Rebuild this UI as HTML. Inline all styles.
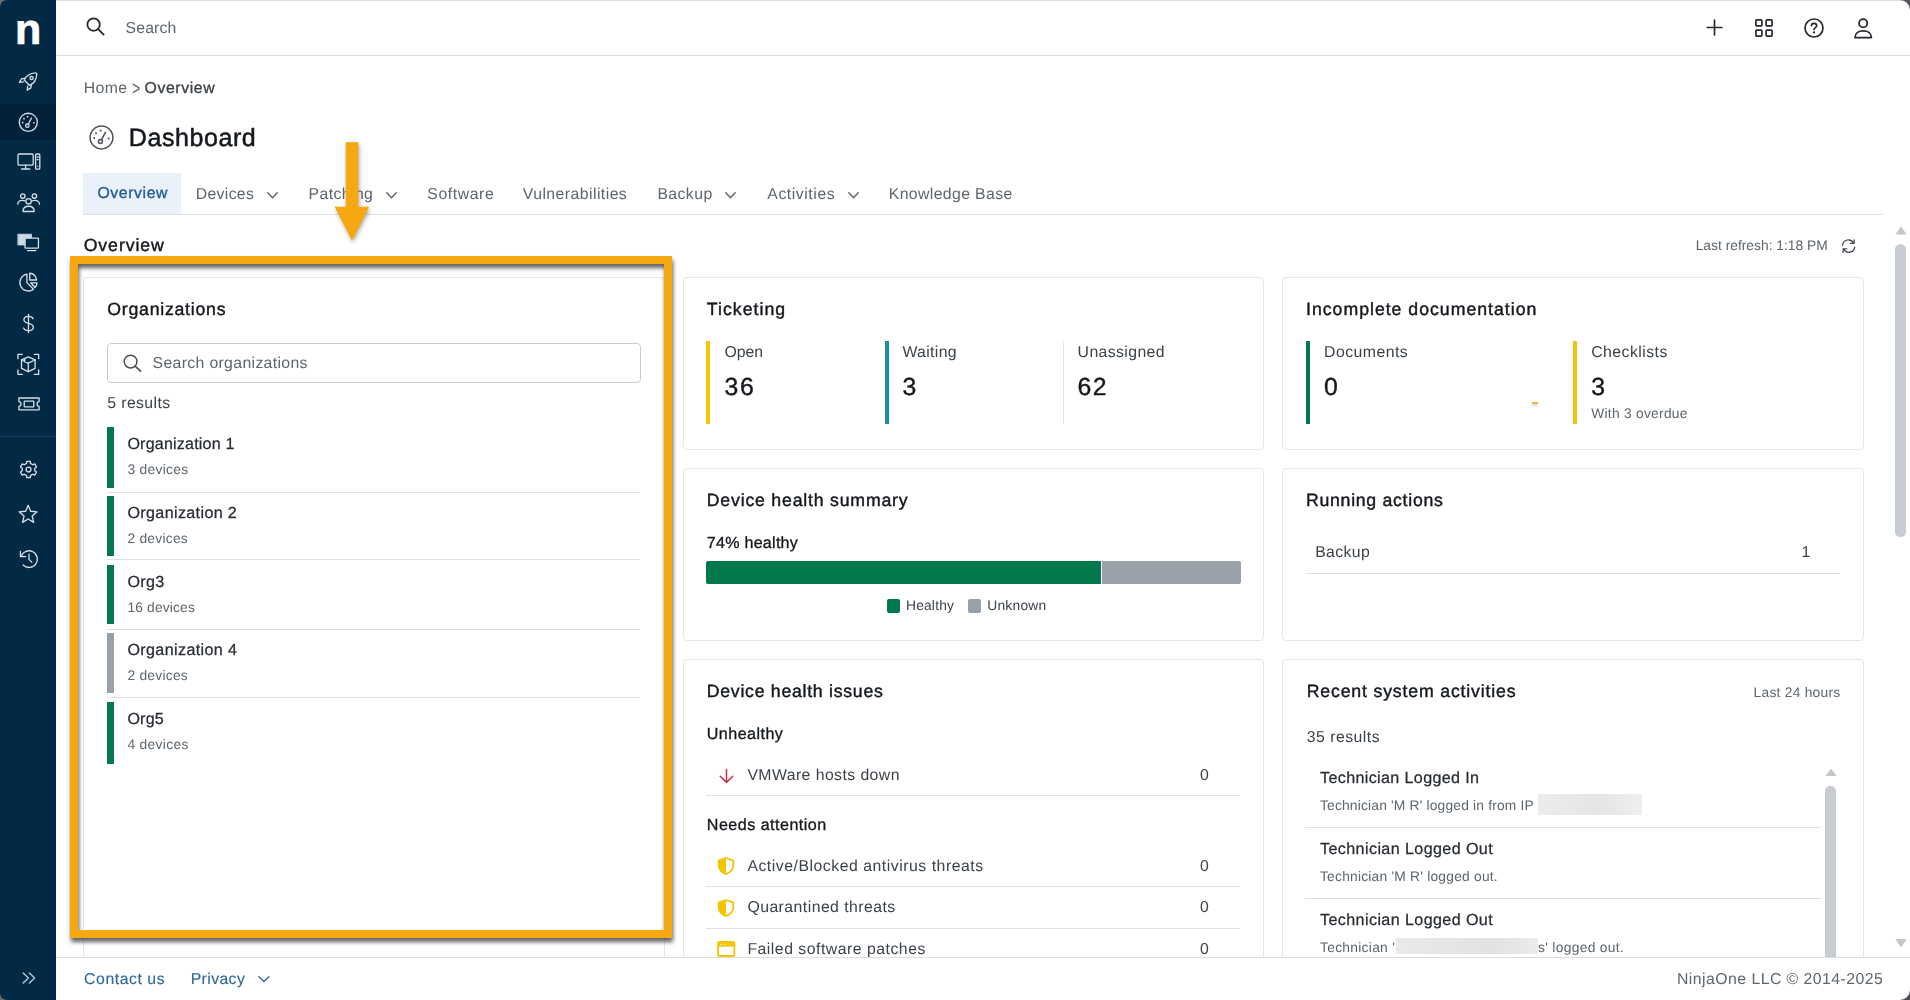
<!DOCTYPE html>
<html lang="en">
<head>
<meta charset="utf-8">
<title>Dashboard</title>
<style>
*{box-sizing:border-box;margin:0;padding:0}
html,body{width:1910px;height:1000px;overflow:hidden;background:#fff}
body{font-family:"Liberation Sans",sans-serif;color:#3b4249;position:relative}
.t{position:absolute;white-space:pre;line-height:1;text-rendering:geometricPrecision}
.a{position:absolute}
svg{position:absolute;overflow:visible}
.card{position:absolute;background:#fff;border:1px solid #e4e6e9;border-radius:4px}
.hr{position:absolute;height:1px;background:#dfe1e4}
</style>
</head>
<body>
<svg style="left:88.8px;top:125.4px" width="25" height="25" viewBox="0 0 25 25" ><g fill="none" stroke="#4a5158" stroke-width="1.5" stroke-linecap="round"><circle cx="12.5" cy="12.5" r="11.4"/><circle cx="11.4" cy="16.6" r="2"/><path d="M12.4 14.8 L16.4 7.4"/><path d="M5.2 13h.01M7 8.2h.01M11.6 5.6h.01M19.6 13.4h.01" stroke-width="2"/></g></svg>
<div class="a" style="left:83px;top:172.7px;width:98.3px;height:41.3px;background:#ebf1f8"></div>
<div class="a" style="left:83px;top:214px;width:1800px;height:1px;background:#dfe2e5"></div>
<svg style="left:267.2px;top:191.8px" width="11" height="6.6" viewBox="0 0 11 6.6" ><path d="M0.8 0.8 L5.5 5.8 L10.2 0.8" fill="none" stroke="#5d656d" stroke-width="1.4" stroke-linecap="round" stroke-linejoin="round"/></svg>
<svg style="left:386.2px;top:191.8px" width="11" height="6.6" viewBox="0 0 11 6.6" ><path d="M0.8 0.8 L5.5 5.8 L10.2 0.8" fill="none" stroke="#5d656d" stroke-width="1.4" stroke-linecap="round" stroke-linejoin="round"/></svg>
<svg style="left:724.8px;top:191.8px" width="11" height="6.6" viewBox="0 0 11 6.6" ><path d="M0.8 0.8 L5.5 5.8 L10.2 0.8" fill="none" stroke="#5d656d" stroke-width="1.4" stroke-linecap="round" stroke-linejoin="round"/></svg>
<svg style="left:847.8px;top:191.8px" width="11" height="6.6" viewBox="0 0 11 6.6" ><path d="M0.8 0.8 L5.5 5.8 L10.2 0.8" fill="none" stroke="#5d656d" stroke-width="1.4" stroke-linecap="round" stroke-linejoin="round"/></svg>
<svg style="left:1840.6px;top:238.6px" width="15.2" height="14.2" viewBox="0 0 16 15" ><g fill="none" stroke="#3b4249" stroke-width="1.3" stroke-linecap="round" stroke-linejoin="round"><path d="M1.6 6.4 A6.2 6.2 0 0 1 13.2 4.2"/><path d="M13.8 0.8 V4.6 H10"/><path d="M14.4 8.6 A6.2 6.2 0 0 1 2.8 10.8"/><path d="M2.2 14.2 V10.4 H6"/></g></svg>
<div class="card" style="left:83px;top:277px;width:581.5px;height:700px;border-bottom:none;border-radius:4px 4px 0 0;"></div>
<div class="card" style="left:683px;top:277px;width:581px;height:172.5px;"></div>
<div class="card" style="left:683px;top:468px;width:581px;height:172.5px;"></div>
<div class="card" style="left:683px;top:659px;width:581px;height:320px;border-bottom:none;border-radius:4px 4px 0 0;"></div>
<div class="card" style="left:1282px;top:277px;width:582px;height:172.5px;"></div>
<div class="card" style="left:1282px;top:468px;width:582px;height:172.5px;"></div>
<div class="card" style="left:1282px;top:659px;width:582px;height:320px;border-bottom:none;border-radius:4px 4px 0 0;"></div>
<div class="a" style="left:107px;top:343px;width:534px;height:39.5px;border:1px solid #c8ccd1;border-radius:4px"></div>
<svg style="left:122.6px;top:354.4px" width="19" height="18" viewBox="0 0 19 18" ><circle cx="7.6" cy="7.6" r="6.4" fill="none" stroke="#4a5158" stroke-width="1.5"/><path d="M12.3 12.3 L17.6 17.2" stroke="#4a5158" stroke-width="1.6" stroke-linecap="round"/></svg>
<div class="a" style="left:107px;top:427.0px;width:7px;height:60.6px;background:#04784d"></div>
<div class="a" style="left:107px;top:496.0px;width:7px;height:60.4px;background:#04784d"></div>
<div class="a" style="left:107px;top:565.0px;width:7px;height:59.2px;background:#04784d"></div>
<div class="a" style="left:107px;top:633.0px;width:7px;height:60.4px;background:#98a1a9"></div>
<div class="a" style="left:107px;top:702.0px;width:7px;height:61.7px;background:#04784d"></div>
<div class="hr" style="left:107px;top:491.8px;width:533px"></div>
<div class="hr" style="left:107px;top:559.4px;width:533px"></div>
<div class="hr" style="left:107px;top:628.5px;width:533px"></div>
<div class="hr" style="left:107px;top:696.9px;width:533px"></div>
<div class="a" style="left:706px;top:341.2px;width:4px;height:82.4px;background:#f5c30f"></div>
<div class="a" style="left:885px;top:341.2px;width:4px;height:82.4px;background:#1b8fa3"></div>
<div class="a" style="left:1063px;top:341.2px;width:1px;height:82.4px;background:#e1e4e7"></div>
<div class="a" style="left:1306px;top:341.2px;width:4px;height:82.4px;background:#04784d"></div>
<div class="a" style="left:1573px;top:341.2px;width:4px;height:82.4px;background:#f5c30f"></div>
<div class="a" style="left:1532px;top:402px;width:6px;height:2px;background:#f2b233;box-shadow:0 2px 2px rgba(0,0,0,.18)"></div>
<div class="a" style="left:706px;top:561.2px;width:395px;height:22.4px;background:#04784d;border-radius:2px 0 0 2px"></div>
<div class="a" style="left:1102px;top:561.2px;width:139px;height:22.4px;background:#98a1a9;border-radius:0 2px 2px 0"></div>
<div class="a" style="left:887.2px;top:599.2px;width:13px;height:13.5px;background:#04784d;border-radius:2px"></div>
<div class="a" style="left:968.4px;top:599.2px;width:13px;height:13.5px;background:#98a1a9;border-radius:2px"></div>
<div class="hr" style="left:706px;top:795.3px;width:534.2px"></div>
<div class="hr" style="left:706px;top:886.3px;width:534.2px"></div>
<div class="hr" style="left:706px;top:928.0px;width:534.2px"></div>
<svg style="left:719px;top:767px" width="15" height="16.5" viewBox="0 0 15 16.5" ><path d="M7.5 2.4V15M1.2 9.2 L7.5 15.4 L13.8 9.2" fill="none" stroke="#c2374d" stroke-width="1.5" stroke-linecap="round" stroke-linejoin="round"/></svg>
<svg style="left:717.3px;top:856.8px" width="18" height="18" viewBox="0 0 18 18" ><path d="M9 1 L16.3 3.7 V8 C16.3 12.2 13.2 15.5 9 17.1 C4.8 15.5 1.7 12.2 1.7 8 V3.7 Z" fill="none" stroke="#f5c400" stroke-width="1.8" stroke-linejoin="round"/><path d="M9 1 L1.7 3.7 V8 C1.7 12.2 4.8 15.5 9 17.1 Z" fill="#f5c400"/></svg>
<svg style="left:717.3px;top:898.8px" width="18" height="18" viewBox="0 0 18 18" ><path d="M9 1 L16.3 3.7 V8 C16.3 12.2 13.2 15.5 9 17.1 C4.8 15.5 1.7 12.2 1.7 8 V3.7 Z" fill="none" stroke="#f5c400" stroke-width="1.8" stroke-linejoin="round"/><path d="M9 1 L1.7 3.7 V8 C1.7 12.2 4.8 15.5 9 17.1 Z" fill="#f5c400"/></svg>
<svg style="left:717.4px;top:941.2px" width="18.4" height="16" viewBox="0 0 18.4 16" ><rect x="1" y="1" width="16.4" height="14" rx="1.6" fill="none" stroke="#f5c400" stroke-width="1.8"/><path d="M1 1.6 H17.4 V5.6 H1Z" fill="#f5c400"/><path d="M3.6 3.4h.01M6.2 3.4h.01M8.8 3.4h.01" stroke="#fff" stroke-width="1.1" stroke-linecap="round"/></svg>
<div class="hr" style="left:1306px;top:573.2px;width:534px"></div>
<div class="hr" style="left:1305px;top:827.4px;width:516px"></div>
<div class="hr" style="left:1305px;top:898.4px;width:516px"></div>
<div class="a" style="left:1538.4px;top:793.6px;width:103.2px;height:21.8px;background:linear-gradient(90deg,#ebecee,#e3e5e7 60%,#eeeff0)"></div>
<div class="a" style="left:1396px;top:938px;width:141.7px;height:16px;background:linear-gradient(90deg,#e9eaec,#e0e2e4 70%,#ebecee)"></div>
<svg style="left:1824.6px;top:768px" width="12" height="8"><path d="M6 0.4 L11.6 8 H0.4Z" fill="#c3c8ce"/></svg>
<div class="a" style="left:1825.3px;top:785.8px;width:10.5px;height:190px;background:#c9cdd3;border-radius:5px"></div>
<div class="a" style="left:0;top:0;width:1910px;height:1000px;will-change:transform"><span class="t" style="left:125.6px;top:21px;font-size:15.8px;color:#5d656d;letter-spacing:0.116px;">Search</span>
<span class="t" style="left:83.7px;top:81px;font-size:15.8px;color:#5d656d;letter-spacing:0.388px;">Home</span>
<span class="t" style="left:131.6px;top:79px;font-size:20px;color:#5d656d;transform:scaleX(.72);transform-origin:0 0;">&gt;</span>
<span class="t" style="left:144.5px;top:81px;font-size:15.8px;color:#3b4249;letter-spacing:0.621px;-webkit-text-stroke:0.3px #3b4249;">Overview</span>
<span class="t" style="left:128.8px;top:126px;font-size:25px;color:#14181c;letter-spacing:0.575px;-webkit-text-stroke:0.5px #14181c;">Dashboard</span>
<span class="t" style="left:97.5px;top:186px;font-size:15.8px;color:#1f5e95;letter-spacing:0.581px;-webkit-text-stroke:0.35px #1f5e95;">Overview</span>
<span class="t" style="left:195.8px;top:187px;font-size:15.8px;color:#5d656d;letter-spacing:0.310px;">Devices</span>
<span class="t" style="left:308.6px;top:187px;font-size:15.8px;color:#5d656d;letter-spacing:0.402px;">Patching</span>
<span class="t" style="left:427.3px;top:187px;font-size:15.8px;color:#5d656d;letter-spacing:0.581px;">Software</span>
<span class="t" style="left:522.8px;top:187px;font-size:15.8px;color:#5d656d;letter-spacing:0.444px;">Vulnerabilities</span>
<span class="t" style="left:657.4px;top:187px;font-size:15.8px;color:#5d656d;letter-spacing:0.418px;">Backup</span>
<span class="t" style="left:767.3px;top:187px;font-size:15.8px;color:#5d656d;letter-spacing:0.555px;">Activities</span>
<span class="t" style="left:888.8px;top:187px;font-size:15.8px;color:#5d656d;letter-spacing:0.373px;">Knowledge Base</span>
<span class="t" style="left:83.7px;top:237px;font-size:17.7px;color:#14181c;letter-spacing:0.917px;-webkit-text-stroke:0.42px #14181c;">Overview</span>
<span class="t" style="left:1695.7px;top:239px;font-size:13.8px;color:#5d656d;letter-spacing:0.009px;">Last refresh: 1:18 PM</span>
<span class="t" style="left:107.3px;top:301px;font-size:17.7px;color:#14181c;letter-spacing:0.757px;-webkit-text-stroke:0.42px #14181c;">Organizations</span>
<span class="t" style="left:152.5px;top:356px;font-size:15.8px;color:#5d656d;letter-spacing:0.348px;">Search organizations</span>
<span class="t" style="left:107.3px;top:396px;font-size:15.8px;color:#3b4249;letter-spacing:0.388px;">5 results</span>
<span class="t" style="left:127.4px;top:436px;font-size:16.1px;color:#272c32;letter-spacing:0.186px;-webkit-text-stroke:0.25px #272c32;">Organization 1</span>
<span class="t" style="left:127.4px;top:463px;font-size:13.8px;color:#5d656d;letter-spacing:0.318px;">3 devices</span>
<span class="t" style="left:127.4px;top:505px;font-size:16.1px;color:#272c32;letter-spacing:0.364px;-webkit-text-stroke:0.25px #272c32;">Organization 2</span>
<span class="t" style="left:127.4px;top:532px;font-size:13.8px;color:#5d656d;letter-spacing:0.259px;">2 devices</span>
<span class="t" style="left:127.4px;top:574px;font-size:16.1px;color:#272c32;letter-spacing:0.348px;-webkit-text-stroke:0.25px #272c32;">Org3</span>
<span class="t" style="left:127.4px;top:601px;font-size:13.8px;color:#5d656d;letter-spacing:0.161px;">16 devices</span>
<span class="t" style="left:127.4px;top:642px;font-size:16.1px;color:#272c32;letter-spacing:0.379px;-webkit-text-stroke:0.25px #272c32;">Organization 4</span>
<span class="t" style="left:127.4px;top:669px;font-size:13.8px;color:#5d656d;letter-spacing:0.259px;">2 devices</span>
<span class="t" style="left:127.4px;top:711px;font-size:16.1px;color:#272c32;letter-spacing:0.205px;-webkit-text-stroke:0.25px #272c32;">Org5</span>
<span class="t" style="left:127.4px;top:738px;font-size:13.8px;color:#5d656d;letter-spacing:0.342px;">4 devices</span>
<span class="t" style="left:706.8px;top:301px;font-size:17.7px;color:#14181c;letter-spacing:1.021px;-webkit-text-stroke:0.42px #14181c;">Ticketing</span>
<span class="t" style="left:724.4px;top:345px;font-size:15.8px;color:#3b4249;letter-spacing:0.041px;">Open</span>
<span class="t" style="left:724.4px;top:376px;font-size:24.8px;color:#14181c;letter-spacing:1.871px;-webkit-text-stroke:0.4px #14181c;">36</span>
<span class="t" style="left:902.4px;top:345px;font-size:15.8px;color:#3b4249;letter-spacing:0.355px;">Waiting</span>
<span class="t" style="left:902.4px;top:376px;font-size:24.8px;color:#14181c;-webkit-text-stroke:0.4px #14181c;">3</span>
<span class="t" style="left:1077.6px;top:345px;font-size:15.8px;color:#3b4249;letter-spacing:0.396px;">Unassigned</span>
<span class="t" style="left:1077.6px;top:376px;font-size:24.8px;color:#14181c;letter-spacing:1.338px;-webkit-text-stroke:0.4px #14181c;">62</span>
<span class="t" style="left:706.8px;top:492px;font-size:17.7px;color:#14181c;letter-spacing:0.799px;-webkit-text-stroke:0.42px #14181c;">Device health summary</span>
<span class="t" style="left:706.8px;top:535px;font-size:16.1px;color:#14181c;letter-spacing:0.248px;-webkit-text-stroke:0.32px #14181c;">74% healthy</span>
<span class="t" style="left:906.0px;top:599px;font-size:13.8px;color:#3b4249;letter-spacing:0.188px;">Healthy</span>
<span class="t" style="left:987.2px;top:599px;font-size:13.8px;color:#3b4249;letter-spacing:0.257px;">Unknown</span>
<span class="t" style="left:706.8px;top:683px;font-size:17.7px;color:#14181c;letter-spacing:0.726px;-webkit-text-stroke:0.42px #14181c;">Device health issues</span>
<span class="t" style="left:706.8px;top:726px;font-size:16.1px;color:#14181c;letter-spacing:0.449px;-webkit-text-stroke:0.32px #14181c;">Unhealthy</span>
<span class="t" style="left:747.4px;top:768px;font-size:15.8px;color:#3b4249;letter-spacing:0.433px;">VMWare hosts down</span>
<span class="t" style="left:1200.1px;top:768px;font-size:15.8px;color:#3b4249;">0</span>
<span class="t" style="left:706.8px;top:817px;font-size:16.1px;color:#14181c;letter-spacing:0.479px;-webkit-text-stroke:0.32px #14181c;">Needs attention</span>
<span class="t" style="left:747.4px;top:859px;font-size:15.8px;color:#3b4249;letter-spacing:0.524px;">Active/Blocked antivirus threats</span>
<span class="t" style="left:1200.1px;top:859px;font-size:15.8px;color:#3b4249;">0</span>
<span class="t" style="left:747.4px;top:900px;font-size:15.8px;color:#3b4249;letter-spacing:0.457px;">Quarantined threats</span>
<span class="t" style="left:1200.1px;top:900px;font-size:15.8px;color:#3b4249;">0</span>
<span class="t" style="left:747.4px;top:942px;font-size:15.8px;color:#3b4249;letter-spacing:0.505px;">Failed software patches</span>
<span class="t" style="left:1200.1px;top:942px;font-size:15.8px;color:#3b4249;">0</span>
<span class="t" style="left:1306.0px;top:301px;font-size:17.7px;color:#14181c;letter-spacing:0.993px;-webkit-text-stroke:0.42px #14181c;">Incomplete documentation</span>
<span class="t" style="left:1324.0px;top:345px;font-size:15.8px;color:#3b4249;letter-spacing:0.482px;">Documents</span>
<span class="t" style="left:1324.0px;top:376px;font-size:24.8px;color:#14181c;-webkit-text-stroke:0.4px #14181c;">0</span>
<span class="t" style="left:1591.2px;top:345px;font-size:15.8px;color:#3b4249;letter-spacing:0.465px;">Checklists</span>
<span class="t" style="left:1591.2px;top:376px;font-size:24.8px;color:#14181c;-webkit-text-stroke:0.4px #14181c;">3</span>
<span class="t" style="left:1591.2px;top:407px;font-size:13.8px;color:#5d656d;letter-spacing:0.267px;">With 3 overdue</span>
<span class="t" style="left:1306.0px;top:492px;font-size:17.7px;color:#14181c;letter-spacing:0.713px;-webkit-text-stroke:0.42px #14181c;">Running actions</span>
<span class="t" style="left:1315.2px;top:545px;font-size:15.8px;color:#3b4249;letter-spacing:0.381px;">Backup</span>
<span class="t" style="left:1801.5px;top:545px;font-size:15.8px;color:#3b4249;">1</span>
<span class="t" style="left:1306.7px;top:683px;font-size:17.7px;color:#14181c;letter-spacing:0.833px;-webkit-text-stroke:0.42px #14181c;">Recent system activities</span>
<span class="t" style="left:1753.6px;top:686px;font-size:13.8px;color:#5d656d;letter-spacing:0.247px;">Last 24 hours</span>
<span class="t" style="left:1306.7px;top:730px;font-size:15.8px;color:#3b4249;letter-spacing:0.495px;">35 results</span>
<span class="t" style="left:1320.0px;top:770px;font-size:16.1px;color:#272c32;letter-spacing:0.363px;-webkit-text-stroke:0.25px #272c32;">Technician Logged In</span>
<span class="t" style="left:1320.0px;top:799px;font-size:13.8px;color:#5d656d;letter-spacing:0.182px;">Technician 'M R' logged in from IP</span>
<span class="t" style="left:1320.0px;top:841px;font-size:16.1px;color:#272c32;letter-spacing:0.403px;-webkit-text-stroke:0.25px #272c32;">Technician Logged Out</span>
<span class="t" style="left:1320.0px;top:870px;font-size:13.8px;color:#5d656d;letter-spacing:0.222px;">Technician 'M R' logged out.</span>
<span class="t" style="left:1320.0px;top:912px;font-size:16.1px;color:#272c32;letter-spacing:0.403px;-webkit-text-stroke:0.25px #272c32;">Technician Logged Out</span>
<span class="t" style="left:1320.0px;top:941px;font-size:13.8px;color:#5d656d;letter-spacing:0.289px;">Technician '</span>
<span class="t" style="left:1538.0px;top:941px;font-size:13.8px;color:#5d656d;letter-spacing:0.322px;">s' logged out.</span></div>
<div class="a" style="left:69.7px;top:256px;width:602.6px;height:682.3px;border:8.4px solid #f5a80f;filter:drop-shadow(1px 4px 2px rgba(0,0,0,.62))"></div>
<svg style="left:330px;top:140px;filter:drop-shadow(1.5px 2px 2px rgba(0,0,0,.35))" width="44" height="104" viewBox="0 0 44 104"><path d="M15.8 2.2 H28.3 V66.7 H39.2 L22 100.5 L4.6 66.7 H15.8 Z" fill="#f5a80f"/></svg>
<div class="a" style="left:56px;top:957px;width:1854px;height:43px;background:#fff;border-top:1px solid #dcdfe2"></div>
<svg style="left:257.6px;top:975.6px" width="11.8" height="6.4" viewBox="0 0 11.8 6.4" ><path d="M0.8 0.8 L5.9 5.6000000000000005 L11.0 0.8" fill="none" stroke="#33699b" stroke-width="1.4" stroke-linecap="round" stroke-linejoin="round"/></svg>
<svg style="left:1899px;top:989px" width="11" height="11"><path d="M11 11H1A10 10 0 0 0 11 1Z" fill="#4a4c52"/></svg>
<div class="a" style="left:0;top:0;width:1910px;height:1000px;will-change:transform"><span class="t" style="left:84.1px;top:972px;font-size:15.8px;color:#33699b;letter-spacing:0.556px;-webkit-text-stroke:0.15px #33699b;">Contact us</span>
<span class="t" style="left:190.7px;top:972px;font-size:15.8px;color:#33699b;letter-spacing:0.385px;-webkit-text-stroke:0.15px #33699b;">Privacy</span>
<span class="t" style="left:1677.0px;top:972px;font-size:15.8px;color:#5d656d;letter-spacing:0.460px;">NinjaOne LLC © 2014-2025</span></div>
<svg style="left:1894.6px;top:225.7px" width="12" height="8.4"><path d="M6 0.3 L11.7 8.4 H0.3Z" fill="#c3c8ce"/></svg>
<div class="a" style="left:1895.3px;top:244.4px;width:10.7px;height:292.4px;background:#c9cdd3;border-radius:5.3px"></div>
<svg style="left:1894.6px;top:938.8px" width="12" height="8.6"><path d="M0.3 0 H11.7 L6 8.4Z" fill="#c3c8ce"/></svg>
<div class="a" style="left:56px;top:0;width:1854px;height:1px;background:#dedfe0"></div>
<div class="a" style="left:56px;top:55px;width:1854px;height:1px;background:#dcdfe2"></div>
<svg style="left:86px;top:17px" width="19" height="19" viewBox="0 0 19 19" ><circle cx="7.6" cy="7.6" r="6.2" fill="none" stroke="#24292e" stroke-width="1.8"/><path d="M12.2 12.2 L17.6 17.6" stroke="#24292e" stroke-width="1.9" stroke-linecap="round"/></svg>
<svg style="left:1706px;top:19.4px" width="17" height="17" viewBox="0 0 17 17" ><path d="M8.5 1.2V15.8M1.2 8.5H15.8" stroke="#24292e" stroke-width="1.7" stroke-linecap="round"/></svg>
<svg style="left:1754.6px;top:19.2px" width="18" height="18" viewBox="0 0 18 18" ><g fill="none" stroke="#24292e" stroke-width="1.7"><rect x="0.9" y="0.9" width="6" height="6" rx="1"/><rect x="11.1" y="0.9" width="6" height="6" rx="1"/><rect x="0.9" y="11.1" width="6" height="6" rx="1"/><rect x="11.1" y="11.1" width="6" height="6" rx="1"/></g></svg>
<svg style="left:1803.7px;top:18px" width="20" height="20" viewBox="0 0 20 20" ><circle cx="10" cy="10" r="9" fill="none" stroke="#24292e" stroke-width="1.7"/><path d="M7.4 7.8 C7.4 6.2 8.6 5.4 10 5.4 C11.6 5.4 12.7 6.4 12.7 7.7 C12.7 9.6 10 9.6 10 11.6" fill="none" stroke="#24292e" stroke-width="1.6" stroke-linecap="round"/><circle cx="10" cy="14.4" r="1.05" fill="#24292e"/></svg>
<svg style="left:1853.6px;top:18px" width="19" height="21" viewBox="0 0 19 21" ><circle cx="9.2" cy="5.2" r="4.1" fill="none" stroke="#24292e" stroke-width="1.8"/><path d="M1 19.6 C1 15.4 4.4 12.8 9.2 12.8 C14 12.8 17.4 15.4 17.4 19.6 Z" fill="none" stroke="#24292e" stroke-width="1.8" stroke-linejoin="round"/></svg>
<svg style="left:1899px;top:0" width="11" height="11"><path d="M11 0H1A10 10 0 0 1 11 10Z" fill="#53555b"/></svg>
<div class="a" style="left:0;top:0;width:56px;height:1000px;background:#022a45"></div>
<div class="a" style="left:0;top:104px;width:56px;height:36px;background:#02213a"></div>
<div class="a" style="left:0;top:436px;width:56px;height:1px;background:#14405e"></div>
<span class="t" style="left:14.9px;top:9.4px;font-size:43px;font-weight:700;color:#fff;-webkit-text-stroke:0.7px #fff">n</span>
<svg style="left:17.0px;top:69.5px" width="22.6" height="22.6" viewBox="0 0 24 24" fill="none" stroke="#d6e0e8" stroke-width="1.3805309734513276" stroke-linecap="round" stroke-linejoin="round"><path d="M13.4 16.4 L7.6 10.6 C9.6 6.4 13.6 3.4 19.4 3 C20.4 2.9 21.1 3.6 21 4.6 C20.6 10.4 17.6 14.4 13.4 16.4Z"/><circle cx="15.4" cy="8.6" r="1.7"/><path d="M8.8 8.8 L5 9.2 L2.6 13.2 L6.8 12.6"/><path d="M15.2 15.2 L14.8 19 L10.8 21.4 L11.4 17.2"/></svg>
<svg style="left:16.9px;top:110.7px" width="22.6" height="22.6" viewBox="0 0 24 24" fill="none" stroke="#d6e0e8" stroke-width="1.3805309734513276" stroke-linecap="round" stroke-linejoin="round"><circle cx="12" cy="12" r="9.6"/><circle cx="11" cy="15.6" r="1.8"/><path d="M11.9 14 L15.4 7.4"/><path d="M6 12.2h.01M7.4 8.2h.01M11.2 6h.01M18 12.6h.01" stroke-width="1.9"/></svg>
<svg style="left:16.6px;top:150.3px" width="24" height="24" viewBox="0 0 24 24" fill="none" stroke="#d6e0e8" stroke-width="1.3" stroke-linecap="round" stroke-linejoin="round"><rect x="1" y="4" width="15.2" height="11.2" rx="1.2"/><path d="M8.6 15.4v3M4.6 19h8.2"/><rect x="18.6" y="4" width="4.2" height="15.2" rx="1"/><path d="M20.2 7h1M20.2 9.6h1M20.7 16.2h.01"/></svg>
<svg style="left:16.9px;top:191.4px" width="23.2" height="23.2" viewBox="0 0 24 24" fill="none" stroke="#d6e0e8" stroke-width="1.3448275862068968" stroke-linecap="round" stroke-linejoin="round"><circle cx="12" cy="10.6" r="2.8"/><path d="M6.2 21.2 C6.2 17.6 8.8 15.8 12 15.8 C15.2 15.8 17.8 17.6 17.8 21.2 Z"/><circle cx="6" cy="5.2" r="2.3"/><circle cx="18" cy="5.2" r="2.3"/><path d="M0.8 13.6 C0.8 10.8 3 9.6 6 9.8 C6.9 9.8 7.6 10 8 10.2"/><path d="M23.2 13.6 C23.2 10.8 21 9.6 18 9.8 C17.1 9.8 16.4 10 16 10.2"/></svg>
<svg style="left:17.4px;top:231.2px" width="22.4" height="22.4" viewBox="0 0 24 24" fill="none" stroke="#d6e0e8" stroke-width="1.392857142857143" stroke-linecap="round" stroke-linejoin="round"><path d="M1.2 3.4h14.4v4H8.4v7.6H1.2z" fill="#cdd9e3" stroke="#cdd9e3" stroke-width="0.8"/><rect x="8.6" y="7.6" width="14.4" height="10.8" rx="0.8"/><path d="M11.4 21h8.8"/></svg>
<svg style="left:16.9px;top:271.4px" width="22.5" height="22.5" viewBox="0 0 24 24" fill="none" stroke="#d6e0e8" stroke-width="1.3866666666666667" stroke-linecap="round" stroke-linejoin="round"><path d="M10.6 3.4 A9 9 0 1 0 17.6 19.4 L10.6 12.4 Z"/><path d="M13.6 2.4 V9.6 H20.8 A7.4 7.4 0 0 0 13.6 2.4 Z"/><path d="M14.6 12.6 H21.4 A8 8 0 0 1 19.2 17.6 Z"/></svg>
<svg style="left:16.6px;top:312.0px" width="23" height="23" viewBox="0 0 24 24" fill="none" stroke="#d6e0e8" stroke-width="1.356521739130435" stroke-linecap="round" stroke-linejoin="round"><path d="M12 2.6v18.8"/><path d="M16.8 7 C16.2 5.4 14.4 4.6 12 4.6 C9.2 4.6 7.2 6 7.2 8.1 C7.2 10.4 9.2 11.2 12 11.9 C15 12.6 17 13.5 17 15.9 C17 18.2 15 19.5 12 19.5 C9.4 19.5 7.6 18.6 6.8 16.8"/></svg>
<svg style="left:17.0px;top:352.9px" width="22.6" height="22.6" viewBox="0 0 24 24" fill="none" stroke="#d6e0e8" stroke-width="1.3805309734513276" stroke-linecap="round" stroke-linejoin="round"><path d="M1 6V1.4h4.6M18.4 1.4H23V6M23 18v4.6h-4.6M5.6 22.6H1V18"/><path d="M12 4.2 L19.2 7.4 V16.4 L12 19.8 L4.8 16.4 V7.4 Z"/><path d="M4.8 7.4 L12 10.8 L19.2 7.4M12 10.8V19.8M8.2 5.9 V9.6"/></svg>
<svg style="left:16.5px;top:392.4px" width="24" height="24" viewBox="0 0 24 24" fill="none" stroke="#d6e0e8" stroke-width="1.3" stroke-linecap="round" stroke-linejoin="round"><path d="M1.9 6 H22.1 V9.6 C20.6 9.8 20 10.9 20 12 C20 13.1 20.6 14.2 22.1 14.4 V17.8 H1.9 V14.4 C3.4 14.2 4 13.1 4 12 C4 10.9 3.4 9.8 1.9 9.6 Z"/><rect x="7.2" y="9.2" width="9.6" height="5.6" rx="0.6"/></svg>
<svg style="left:17.9px;top:458.5px" width="21" height="21" viewBox="0 0 24 24" fill="none" stroke="#d6e0e8" stroke-width="1.4857142857142858" stroke-linecap="round" stroke-linejoin="round"><path d="M10.00 2.61 L14.00 2.61 L14.26 5.06 L16.88 6.58 L19.13 5.58 L21.13 9.03 L19.14 10.48 L19.14 13.52 L21.13 14.97 L19.13 18.42 L16.88 17.42 L14.26 18.94 L14.00 21.39 L10.00 21.39 L9.74 18.94 L7.12 17.42 L4.87 18.42 L2.87 14.97 L4.86 13.52 L4.86 10.48 L2.87 9.03 L4.87 5.58 L7.12 6.58 L9.74 5.06Z" stroke-linejoin="round"/><circle cx="12" cy="12" r="2.8"/></svg>
<svg style="left:17.4px;top:502.9px" width="22.3" height="22.3" viewBox="0 0 24 24" fill="none" stroke="#d6e0e8" stroke-width="1.399103139013453" stroke-linecap="round" stroke-linejoin="round"><path d="M12.00 2.40 L14.70 8.88 L21.70 9.45 L16.37 14.02 L18.00 20.85 L12.00 17.20 L6.00 20.85 L7.63 14.02 L2.30 9.45 L9.30 8.88Z"/></svg>
<svg style="left:17.5px;top:547.8px" width="22" height="22" viewBox="0 0 24 24" fill="none" stroke="#d6e0e8" stroke-width="1.4181818181818182" stroke-linecap="round" stroke-linejoin="round"><path d="M3.4 9.2 A9.1 9.1 0 1 1 5.6 18.6"/><path d="M2.6 3.6 V9.4 H8.4"/><path d="M12 6.8 V12.4 L15 15.4"/></svg>
<svg style="left:22px;top:971.9px" width="14" height="12" viewBox="0 0 14 12" ><path d="M1.2 1 L6.4 6 L1.2 11M7.4 1 L12.6 6 L7.4 11" fill="none" stroke="#abc6de" stroke-width="1.5" stroke-linecap="round" stroke-linejoin="round"/></svg>
<svg style="left:0;top:0" width="8" height="8"><path d="M0 0H7A7 7 0 0 0 0 7Z" fill="#6a6d70"/></svg>
<svg style="left:0;top:992px" width="8" height="8"><path d="M0 8H7A7 7 0 0 1 0 1Z" fill="#6a6d70"/></svg>
</body>
</html>
